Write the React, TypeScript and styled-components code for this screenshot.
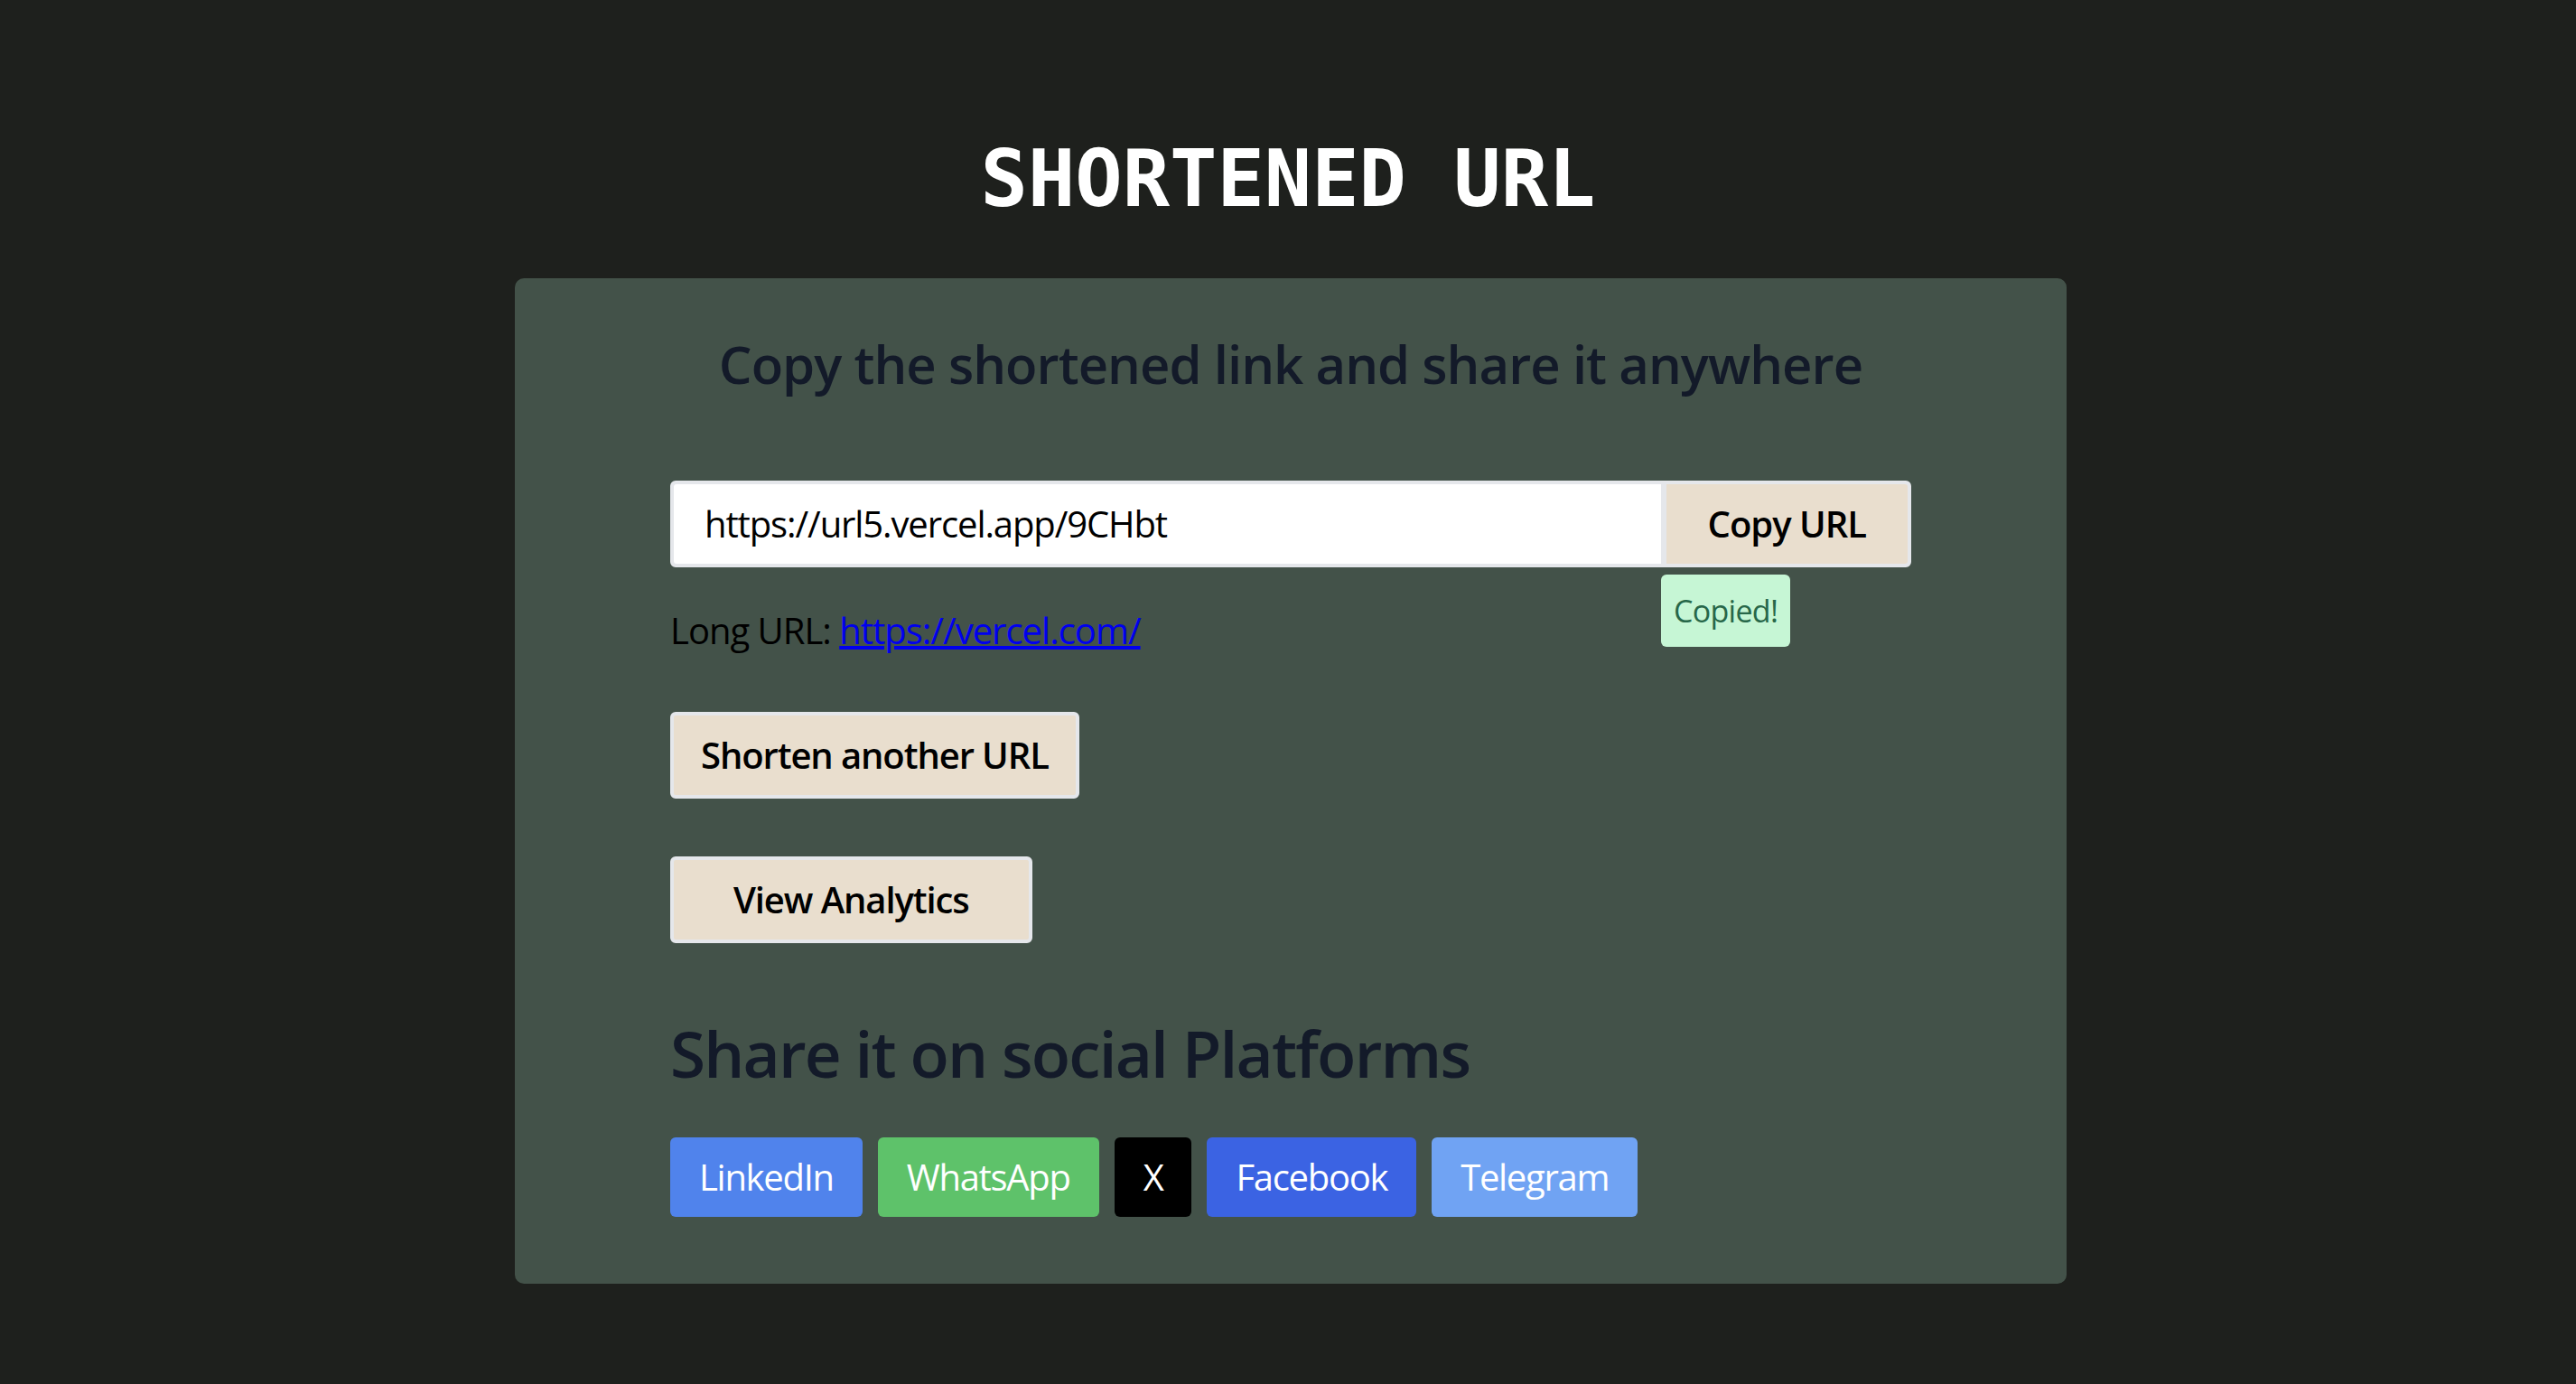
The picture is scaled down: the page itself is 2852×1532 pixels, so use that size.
import React from 'react';
import styled, { createGlobalStyle } from 'styled-components';

const Global = createGlobalStyle`
  html, body { margin: 0; padding: 0; background: #1e201d; }
  body { font-family: "Open Sans", "Noto Sans", sans-serif; }
  * { box-sizing: border-box; }
`;

const Page = styled.main`
  min-height: 1532px;
  display: flex;
  flex-direction: column;
  align-items: center;
  padding-top: 155px;
`;

const Title = styled.h1`
  margin: 0;
  font-family: "DejaVu Sans Mono", monospace;
  font-weight: 700;
  font-size: 87px;
  line-height: 87px;
  color: #ffffff;
`;

const Card = styled.section`
  margin-top: 66px;
  margin-left: 6px;
  width: 1718px;
  background: #435249;
  border-radius: 10px;
  padding: 60px 172px 74px;
  display: flex;
  flex-direction: column;
  align-items: flex-start;
`;

const Subtitle = styled.h2`
  align-self: stretch;
  margin: 0;
  text-align: center;
  font-size: 58px;
  letter-spacing: -0.95px;
  line-height: 1.2;
  font-weight: 600;
  color: #131a29;
`;

const InputRow = styled.div`
  position: relative;
  margin-top: 94px;
  width: 100%;
  height: 96px;
  display: flex;
  border: 4px solid #e5e7eb;
  border-radius: 6px;
  background: #e5e7eb;
`;

const UrlInput = styled.input`
  flex: 1;
  min-width: 0;
  border: none;
  outline: none;
  background: #ffffff;
  border-radius: 3px 0 0 3px;
  padding: 0 34px;
  font-family: inherit;
  font-size: 40px;
  letter-spacing: -1.1px;
  color: #000;
`;

const CopyButton = styled.button`
  margin-left: 6px;
  border: none;
  background: #e9dece;
  border-radius: 0 3px 3px 0;
  padding: 0 46px;
  font-family: inherit;
  font-size: 40px;
  letter-spacing: -1px;
  font-weight: 600;
  color: #000;
`;

const Tooltip = styled.span`
  position: absolute;
  top: calc(100% + 12px);
  left: 1093px;
  background: #c6f6d5;
  color: #276749;
  border-radius: 6px;
  padding: 14px 14px;
  font-size: 34px;
  letter-spacing: -0.7px;
  line-height: 52px;
`;

const LongUrl = styled.p`
  margin: 40px 0 0;
  font-size: 40px;
  letter-spacing: -1px;
  line-height: 1.5;
  color: #000;
  a { color: #0000ee; text-decoration: underline; }
`;

const ActionButton = styled.button<{ $padX: number; $mt: number }>`
  margin-top: ${(p) => p.$mt}px;
  border: 4px solid #e5e7eb;
  border-radius: 6px;
  background: #e9dece;
  padding: 14px ${(p) => p.$padX}px;
  font-family: inherit;
  font-size: 40px;
  letter-spacing: -1.1px;
  line-height: 60px;
  font-weight: 600;
  color: #000;
`;

const ShareHeading = styled.h3`
  margin: 79px 0 0;
  font-size: 71px;
  letter-spacing: -1.8px;
  line-height: 1.2;
  font-weight: 600;
  color: #131a29;
`;

const SocialRow = styled.div`
  margin-top: 51px;
  display: flex;
  gap: 17px;
`;

const SocialButton = styled.a<{ $bg: string }>`
  display: block;
  background: ${(p) => p.$bg};
  color: #ffffff;
  border-radius: 6px;
  padding: 14px 32px;
  font-size: 40px;
  letter-spacing: -1.3px;
  line-height: 60px;
  text-decoration: none;
`;

const socials = [
  { name: 'LinkedIn', bg: '#5083ec' },
  { name: 'WhatsApp', bg: '#5ec26a' },
  { name: 'X', bg: '#000000' },
  { name: 'Facebook', bg: '#3b63e3' },
  { name: 'Telegram', bg: '#70a3f3' },
];

export default function App() {
  return (
    <>
      <Global />
      <Page>
        <Title>SHORTENED URL</Title>
        <Card>
          <Subtitle>Copy the shortened link and share it anywhere</Subtitle>
          <InputRow>
            <UrlInput readOnly value="https://url5.vercel.app/9CHbt" />
            <CopyButton>Copy URL</CopyButton>
            <Tooltip>Copied!</Tooltip>
          </InputRow>
          <LongUrl>
            Long URL: <a href="#">https://vercel.com/</a>
          </LongUrl>
          <ActionButton $padX={30} $mt={60}>Shorten another URL</ActionButton>
          <ActionButton $padX={66} $mt={64}>View Analytics</ActionButton>
          <ShareHeading>Share it on social Platforms</ShareHeading>
          <SocialRow>
            {socials.map((s) => (
              <SocialButton key={s.name} $bg={s.bg} href="#">
                {s.name}
              </SocialButton>
            ))}
          </SocialRow>
        </Card>
      </Page>
    </>
  );
}
